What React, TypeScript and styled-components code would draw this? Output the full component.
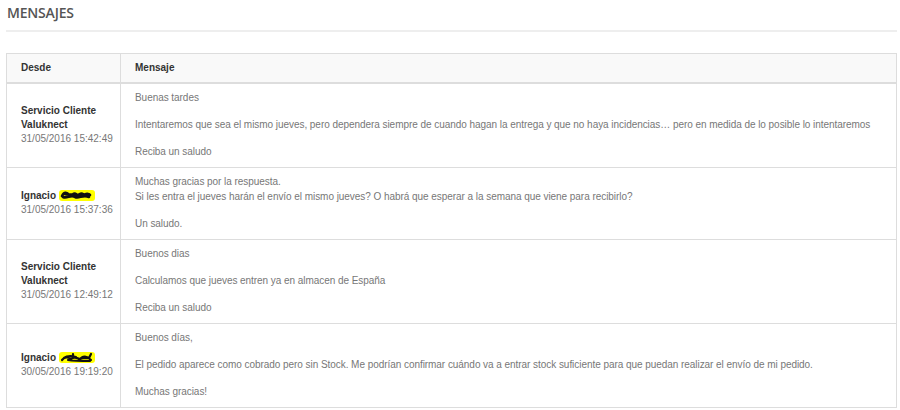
import React from 'react';
import styled, { createGlobalStyle } from 'styled-components';

interface Message {
	from: string[];
	redacted?: 'a' | 'b';
	date: string;
	lines: string[][];
}

const messages: Message[] = [
	{
		from: ['Servicio Cliente', 'Valuknect'],
		date: '31/05/2016 15:42:49',
		lines: [
			['Buenas tardes'],
			['Intentaremos que sea el mismo jueves, pero dependera siempre de cuando hagan la entrega y que no haya incidencias… pero en medida de lo posible lo intentaremos'],
			['Reciba un saludo'],
		],
	},
	{
		from: ['Ignacio'],
		redacted: 'a',
		date: '31/05/2016 15:37:36',
		lines: [
			['Muchas gracias por la respuesta.', 'Si les entra el jueves harán el envío el mismo jueves? O habrá que esperar a la semana que viene para recibirlo?'],
			['Un saludo.'],
		],
	},
	{
		from: ['Servicio Cliente', 'Valuknect'],
		date: '31/05/2016 12:49:12',
		lines: [
			['Buenos dias'],
			['Calculamos que jueves entren ya en almacen de España'],
			['Reciba un saludo'],
		],
	},
	{
		from: ['Ignacio'],
		redacted: 'b',
		date: '30/05/2016 19:19:20',
		lines: [
			['Buenos días,'],
			['El pedido aparece como cobrado pero sin Stock. Me podrían confirmar cuándo va a entrar stock suficiente para que puedan realizar el envío de mi pedido.'],
			['Muchas gracias!'],
		],
	},
];

// yellow marker with a scribble over the surname
const Scribble = ({ variant }: { variant: 'a' | 'b' }) => (
	<Marker>
		<svg width="36" height="11" viewBox="0 0 36 11">
			{variant === 'a' ? (
				<path
					d="M3 6 C5 2 8 2 10 5 C12 8 14 2 17 4 C19 7 21 2 24 4 C26 7 28 2 31 5 M4 7 C8 9 12 4 16 7 C20 9 24 4 30 7 M6 4 C10 6 14 3 20 5 C24 6 27 3 29 4"
					stroke="#111"
					strokeWidth="2.6"
					fill="none"
					strokeLinecap="round"
				/>
			) : (
				<path
					d="M3 8 C6 4 9 5 12 7 C15 4 18 6 21 7 C24 5 27 7 30 6 L32 2 M5 6 C9 3 13 4 17 5 M20 8 C24 3 28 4 32 8 M14 6 L14 2 M9 8 C15 9 22 9 31 9"
					stroke="#111"
					strokeWidth="2.2"
					fill="none"
					strokeLinecap="round"
				/>
			)}
		</svg>
	</Marker>
);

const App = () => {
	return (
		<>
			<GlobalStyle />
			<Page>
				<Title>MENSAJES</Title>
				<Divider />
				<Table>
					<colgroup>
						<col style={{ width: 114 }} />
						<col />
					</colgroup>
					<thead>
						<tr>
							<HeadCell>Desde</HeadCell>
							<HeadCell>Mensaje</HeadCell>
						</tr>
					</thead>
					<tbody>
						{messages.map((m, i) => (
							<tr key={i}>
								<FromCell>
									{m.from.map((f, j) => (
										<Name key={j}>
											{f}
											{m.redacted && <> <Scribble variant={m.redacted} /></>}
										</Name>
									))}
									<DateText>{m.date}</DateText>
								</FromCell>
								<BodyCell>
									{m.lines.map((para, j) => (
										<Para key={j}>
											{para.map((l, k) => (
												<React.Fragment key={k}>
													{k > 0 && <br />}
													{l}
												</React.Fragment>
											))}
										</Para>
									))}
								</BodyCell>
							</tr>
						))}
					</tbody>
				</Table>
			</Page>
		</>
	);
};

export default App;

const GlobalStyle = createGlobalStyle`
	body {
		margin: 0;
		background: #ffffff;
		font-family: "Liberation Sans", Arial, sans-serif;
	}
`;

const Page = styled.div`
	padding: 0 3px 0 6px;
`;

const Title = styled.h3`
	margin: 0;
	padding: 3px 0 0 1px;
	font-family: "Open Sans", sans-serif;
	font-weight: 600;
	font-size: 14px;
	line-height: 19px;
	color: #555555;
	letter-spacing: -0.2px;
`;

const Divider = styled.hr`
	margin: 8px 0 21px;
	border: 0;
	border-top: 2px solid #eeeeee;
`;

const Table = styled.table`
	width: 100%;
	table-layout: fixed;
	border-collapse: collapse;
	border: 1px solid #dddddd;
	font-size: 10px;
	line-height: 14px;
`;

const HeadCell = styled.th`
	box-sizing: border-box;
	text-align: left;
	background: #f9f9f9;
	color: #333333;
	font-weight: bold;
	height: 29px;
	padding: 0 14px;
	border: 1px solid #dddddd;
	border-bottom-width: 2px;
	vertical-align: middle;
`;

const FromCell = styled.td`
	padding: 6px 4px 6px 14px;
	border: 1px solid #dddddd;
	vertical-align: middle;
	white-space: nowrap;
`;

const BodyCell = styled.td`
	padding: 6px 14px 8px;
	border: 1px solid #dddddd;
	vertical-align: top;
	color: #777777;
	line-height: 15px;
	letter-spacing: -0.05px;
`;

const Name = styled.div`
	font-weight: bold;
	color: #333333;
`;

const DateText = styled.div`
	color: #777777;
`;

const Para = styled.p`
	margin: 0 0 12px;

	&:last-child {
		margin-bottom: 0;
	}
`;

const Marker = styled.span`
	display: inline-block;
	vertical-align: -2px;
	background: #ffff00;
	border-radius: 3px;
	line-height: 0;
`;
